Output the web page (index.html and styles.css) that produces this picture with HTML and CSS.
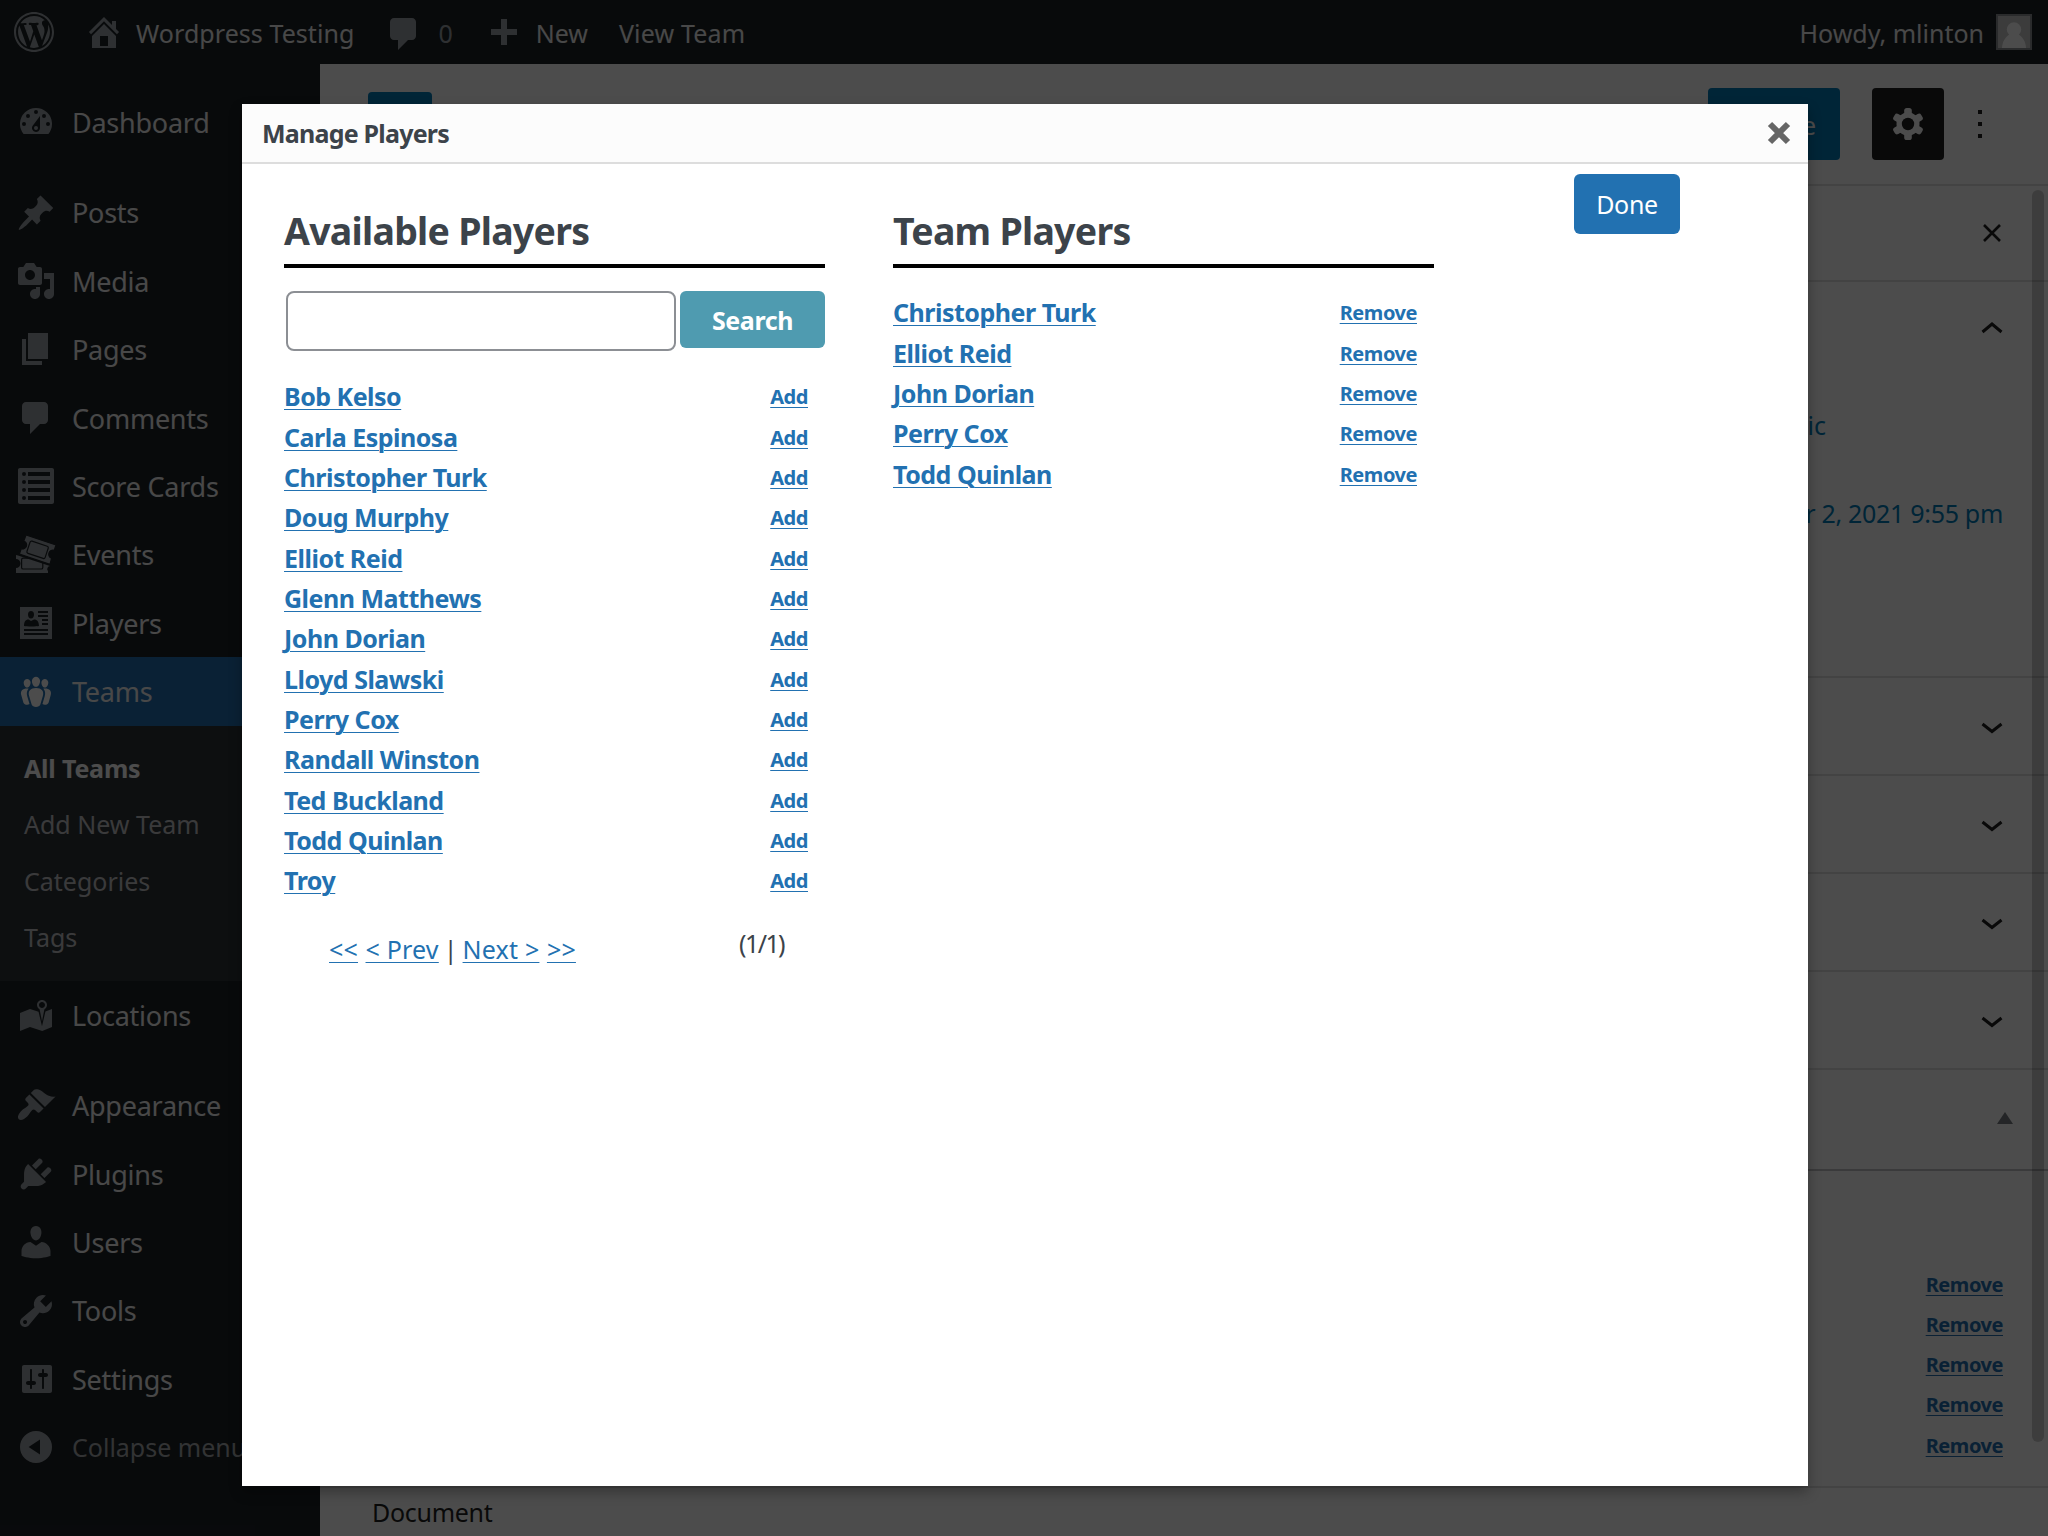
FILE: index.html
```html
<!DOCTYPE html>
<html lang="en">
<head>
<meta charset="utf-8">
<title>Edit Team</title>
<link rel="stylesheet" href="styles.css">
</head>
<body>
<header class="adminbar">
  <svg class="wp-logo" viewBox="0 0 20 20"><path d="M20 10c0-5.52-4.48-10-10-10S0 4.48 0 10s4.48 10 10 10 10-4.48 10-10zM10 1.01c4.97 0 8.99 4.02 8.99 8.99s-4.02 8.99-8.99 8.99S1.01 14.97 1.01 10 5.03 1.01 10 1.01zM8.01 14.82L4.96 6.61c.49-.03 1.05-.08 1.05-.08.43-.05.38-1.01-.06-.99 0 0-1.29.1-2.13.1-.15 0-.33 0-.52-.01 1.44-2.17 3.9-3.6 6.7-3.6 2.09 0 3.99.79 5.41 2.09-.6-.08-1.45.35-1.45 1.42 0 .66.38 1.22.79 1.88.31.54.5 1.22.5 2.21 0 1.34-1.27 4.48-1.27 4.48l-2.71-7.5c.48-.03.75-.16.75-.16.43-.05.38-1.1-.05-1.08 0 0-1.3.11-2.14.11-.78 0-2.11-.11-2.11-.11-.43-.02-.48 1.06-.05 1.08l.84.08 1.12 3.04zm6.02 2.15L16.64 10s.67-1.69.39-3.81c.63 1.14.94 2.42.94 3.81 0 2.96-1.56 5.58-3.94 6.97zM2.68 6.77L6.5 17.25c-2.67-1.3-4.47-4.08-4.47-7.25 0-1.16.2-2.23.65-3.23zm7.45 4.53l2.29 6.25c-.75.27-1.57.42-2.42.42-.72 0-1.41-.11-2.06-.3z"/></svg>
  <a class="bar-item bar-site"><svg viewBox="0 0 20 20"><path d="M16 8.5l1.53 1.53-1.06 1.06L10 4.6l-6.47 6.47-1.06-1.06L10 2.5l4 4v-2h2v4zm-6-2.46l6 5.99V18H4v-5.97zM12 17v-5H8v5h4z"/></svg><span>Wordpress Testing</span></a>
  <a class="bar-item bar-comments"><svg viewBox="0 0 20 20"><path d="M5 2h9c1.1 0 2 .9 2 2v7c0 1.1-.9 2-2 2h-2l-5 5v-5H5c-1.1 0-2-.9-2-2V4c0-1.1.9-2 2-2z"/></svg><span>0</span></a>
  <a class="bar-item bar-new"><svg viewBox="0 0 20 20"><path d="M8.5 3.5h3v5h5v3h-5v5h-3v-5h-5v-3h5z"/></svg><span>New</span></a>
  <a class="bar-item bar-view"><span>View Team</span></a>
  <a class="bar-item bar-user"><span>Howdy, mlinton</span><svg class="avatar" viewBox="0 0 36 36"><rect width="36" height="36" fill="#8c8f94"/><rect x="2" y="2" width="32" height="32" fill="#c8c8c8"/><circle cx="18" cy="15.500" r="7.200" fill="#fff"/><path d="M6 34c0-6 4-12.500 8-13.500h8c4 1 8 7.500 8 13.500z" fill="#fff"/></svg></a>
</header>

<div class="layout">
  <nav class="menu">
    <a class="item"><svg viewBox="0 0 20 20"><path fill-rule="evenodd" d="M3.800 16h12.400A8 8 0 1 0 3.800 16zM10 4a1 1 0 1 1 0 2 1 1 0 0 1 0-2zM6 6a1 1 0 1 1 0 2 1 1 0 0 1 0-2zM14 6a1 1 0 1 1 0 2 1 1 0 0 1 0-2zM4 10a1 1 0 1 1 0 2 1 1 0 0 1 0-2zM16 10a1 1 0 1 1 0 2 1 1 0 0 1 0-2zM12 7v6a2 2 0 1 1-3.750-1zM10 12a1 1 0 1 0 0 2 1 1 0 0 0 0-2z"/></svg><span>Dashboard</span></a>
    <div class="separator"></div>
    <a class="item"><svg viewBox="0 0 20 20"><path d="M10.440 3.020l1.820-1.820 6.360 6.350-1.830 1.820c-1.050-.68-2.480-.57-3.410.36l-.75.75c-.92.93-1.040 2.350-.35 3.410l-1.830 1.820-2.410-2.410-2.800 2.790c-.42.42-3.380 2.710-3.800 2.290s1.860-3.390 2.280-3.810l2.790-2.790L4.100 9.360l1.830-1.820c1.050.69 2.480.57 3.400-.36l.75-.75c.93-.92 1.050-2.350.36-3.410z"/></svg><span>Posts</span></a>
    <a class="item"><svg viewBox="0 0 20 20"><path d="M13 11V4c0-.55-.45-1-1-1h-1.670L9 1H5L3.670 3H2c-.55 0-1 .45-1 1v7c0 .55.45 1 1 1h10c.55 0 1-.45 1-1zM7 4.500c1.380 0 2.500 1.120 2.500 2.500S8.380 9.500 7 9.500 4.500 8.380 4.500 7 5.620 4.500 7 4.500zM14 6h5v10.500c0 1.380-1.120 2.500-2.500 2.500S14 17.880 14 16.500s1.120-2.500 2.500-2.500c.17 0 .34.02.5.05V9h-3V6zm-4 8.050V13h2v3.500c0 1.380-1.120 2.500-2.500 2.500S7 17.880 7 16.500 8.120 14 9.500 14c.17 0 .34.02.5.05z"/></svg><span>Media</span></a>
    <a class="item"><svg viewBox="0 0 20 20"><path d="M6 15V2h10v13H6zm-1 1h8v2H3V5h2v11z"/></svg><span>Pages</span></a>
    <a class="item"><svg viewBox="0 0 20 20"><path d="M5 2h9c1.100 0 2 .9 2 2v7c0 1.100-.9 2-2 2h-2l-5 5v-5H5c-1.100 0-2-.9-2-2V4c0-1.100.9-2 2-2z"/></svg><span>Comments</span></a>
    <a class="item"><svg viewBox="0 0 20 20"><path fill-rule="evenodd" d="M2 19h16c.55 0 1-.45 1-1V2c0-.55-.45-1-1-1H2c-.55 0-1 .45-1 1v16c0 .55.45 1 1 1zM4 3a1 1 0 1 1 0 2 1 1 0 0 1 0-2zM17 3v2H6V3zM4 7a1 1 0 1 1 0 2 1 1 0 0 1 0-2zM17 7v2H6V7zM4 11a1 1 0 1 1 0 2 1 1 0 0 1 0-2zM17 11v2H6v-2zM4 15a1 1 0 1 1 0 2 1 1 0 0 1 0-2zM17 15v2H6v-2z"/></svg><span>Score Cards</span></a>
    <a class="item"><svg viewBox="0 0 20 20"><path d="M0 10l1 .2 16 5.300A1.500 1.500 0 0 0 16 18v1H0v-2.500a2 2 0 0 0 0-4.500z"/><rect class="cut" x="2.800" y="11.600" width="10.600" height="5.400" rx=".8"/><path class="ticket-front" d="M5 0l15 5-.9 2.700a2 2 0 0 0-1.300 3.900L17 14.700 1.700 9.500l.9-2.600A2 2 0 0 0 3.900 3z"/><rect class="cut" x="6" y="4.200" width="9.600" height="6.400" rx=".8" transform="rotate(18.500 10.800 7.400)"/></svg><span>Events</span></a>
    <a class="item"><svg viewBox="0 0 20 20"><path fill-rule="evenodd" d="M2 2h16v16H2zM7.500 4C6.500 4 6 4.800 6 5.700c0 .9.400 2.100 1.500 2.100S9 6.600 9 5.700C9 4.800 8.500 4 7.500 4zM4 11.500c1 .3 6.500.3 7.500 0 0-2-.8-3.300-2.500-3.300L7.500 9 6.300 8.200C4.600 8.200 4 9.500 4 11.500zM11 4h5v1h-5zM11 6h5v1h-5zM13 8h3v1h-3zM13 10h3v1h-3zM4 13h12v1H4zM4 15h12v1H4z"/></svg><span>Players</span></a>
    <a class="item current"><svg viewBox="0 0 20 20"><path d="M8.030 4.460c-.29 1.280.55 3.460 1.970 3.460 1.410 0 2.250-2.180 1.960-3.460-.22-.98-1.080-1.630-1.960-1.630-.89 0-1.740.65-1.970 1.630zm-4.130.9c-.25 1.080.47 2.930 1.670 2.930s1.920-1.850 1.670-2.930c-.19-.83-.92-1.390-1.670-1.390s-1.480.56-1.670 1.390zm8.860 0c-.25 1.080.47 2.930 1.660 2.930 1.200 0 1.920-1.850 1.670-2.930-.19-.83-.92-1.390-1.670-1.390-.74 0-1.470.56-1.660 1.390zm-.59 11.430l1.250-4.300C14.200 10 12.710 8.470 10 8.470c-2.720 0-4.210 1.530-3.440 4.020l1.260 4.300C8.050 17.510 9 18 10 18c.98 0 1.940-.49 2.170-1.210zm-6.100-7.630c-.49.67-.96 1.830-.42 3.590l1.120 3.790c-.34.2-.77.31-1.200.31-.85 0-1.650-.41-1.850-1.030l-1.070-3.650c-.65-2.110.61-3.400 2.920-3.400.27 0 .54.02.79.06-.1.100-.2.220-.29.330zm8.350-.39c2.310 0 3.580 1.290 2.920 3.400l-1.070 3.650c-.2.62-1 1.030-1.850 1.030-.43 0-.86-.11-1.200-.31l1.110-3.770c.55-1.780.08-2.940-.42-3.610-.08-.11-.18-.23-.28-.33.25-.04.51-.06.79-.06z"/></svg><span>Teams</span></a>
    <div class="submenu"><a class="active">All Teams</a><a>Add New Team</a><a>Categories</a><a>Tags</a></div>
    <a class="item"><svg viewBox="0 0 20 20"><path d="M13 13.140l1.170-5.940c.79-.43 1.330-1.250 1.330-2.200 0-1.380-1.120-2.500-2.500-2.500S10.500 3.620 10.500 5c0 .95.54 1.770 1.330 2.200zm0-9.640c.83 0 1.500.67 1.500 1.500s-.67 1.500-1.500 1.500-1.500-.67-1.500-1.500.67-1.500 1.500-1.500zm1.720 4.800L18 6.970v9L13.120 18 7 15.970l-5 2v-9l5-2 4.270 1.410 1.730 7.300z"/></svg><span>Locations</span></a>
    <div class="separator"></div>
    <a class="item"><svg viewBox="0 0 20 20"><path d="M14.480 11.060L7.410 3.990l1.500-1.500c.5-.56 2.300-.47 3.510.32 1.210.8 1.430 1.280 2.910 2.100 1.180.64 2.450 1.260 4.450.85zm-.71.71L6.700 4.700 4.930 6.470c-.39.39-.39 1.020 0 1.410l1.060 1.060c.39.39.39 1.030 0 1.420-.6.6-1.430 1.110-2.210 1.690-.35.26-.7.53-1.010.84C1.430 14.230.4 16.080 1.400 17.070c.99 1 2.840-.03 4.180-1.360.31-.31.58-.66.85-1.020.57-.78 1.080-1.610 1.690-2.210.39-.39 1.020-.39 1.410 0l1.060 1.060c.39.39 1.020.39 1.410 0z"/></svg><span>Appearance</span></a>
    <a class="item"><svg viewBox="0 0 20 20"><path d="M13.110 4.360L9.870 7.600 8 5.730l3.240-3.240c.35-.34 1.050-.2 1.560.32.52.51.66 1.210.31 1.550zm-8 1.770l.91-1.120 9.010 9.010-1.190.84c-.71.71-2.630 1.160-3.820 1.160H6.140L4.900 17.260c-.59.59-1.540.59-2.120 0-.59-.58-.59-1.530 0-2.120l1.240-1.240v-3.880c0-1.130.4-3.190 1.090-3.890zm7.260 3.970l3.240-3.240c.34-.35 1.040-.21 1.550.31.52.51.66 1.210.31 1.550l-3.240 3.250z"/></svg><span>Plugins</span></a>
    <a class="item"><svg viewBox="0 0 20 20"><path d="M10 9.250c-2.270 0-2.730-3.440-2.730-3.440C7 4.020 7.820 2 9.970 2c2.160 0 2.980 2.020 2.710 3.810 0 0-.41 3.440-2.680 3.440zm0 2.570L12.720 10c2.390 0 4.520 2.330 4.520 4.530v2.490s-3.650 1.130-7.240 1.130c-3.650 0-7.240-1.130-7.240-1.130v-2.490c0-2.250 1.940-4.480 4.470-4.480z"/></svg><span>Users</span></a>
    <a class="item"><svg viewBox="0 0 20 20"><path d="M16.680 9.770c-1.340 1.340-3.300 1.670-4.950.99l-5.410 6.520c-.99.99-2.590.99-3.580 0s-.99-2.590 0-3.570l6.520-5.420c-.68-1.650-.35-3.610.99-4.950 1.280-1.280 3.120-1.620 4.720-1.060l-2.890 2.890 2.820 2.820 2.860-2.870c.53 1.580.18 3.390-1.080 4.650zM3.810 16.210c.4.39 1.040.39 1.430 0 .4-.4.4-1.040 0-1.430-.39-.4-1.030-.4-1.430 0-.39.39-.39 1.030 0 1.430z"/></svg><span>Tools</span></a>
    <a class="item"><svg viewBox="0 0 20 20"><path d="M18 16V4c0-.55-.45-1-1-1H4c-.55 0-1 .45-1 1v12c0 .55.45 1 1 1h13c.55 0 1-.45 1-1zM8 11h1c.55 0 1 .45 1 1s-.45 1-1 1H8v1.500c0 .28-.22.5-.5.5s-.5-.22-.5-.5V13H6c-.55 0-1-.45-1-1s.45-1 1-1h1V5.500c0-.28.22-.5.5-.5s.5.22.5.5V11zm5-2h-1c-.55 0-1-.45-1-1s.45-1 1-1h1V5.500c0-.28.22-.5.5-.5s.5.22.5.5V7h1c.55 0 1 .45 1 1s-.45 1-1 1h-1v5.500c0 .28-.22.5-.5.5s-.5-.22-.5-.5V9z"/></svg><span>Settings</span></a>
    <a class="item collapse"><svg viewBox="0 0 20 20"><path fill-rule="evenodd" d="M10 2a8 8 0 1 0 0 16 8 8 0 0 0 0-16zM12 6.300v7.400L6.300 10z"/></svg><span>Collapse menu</span></a>
  </nav>

  <main class="editor">
    <div class="toolbar">
      <span class="inserter"></span>
      <span class="update">Update</span>
      <span class="settings"><svg viewBox="0 0 32 34"><g fill="#fff"><circle cx="16" cy="17" r="11.500"/><rect x="12.200" y="1" width="7.600" height="32" rx="2.600"/><rect x="12.200" y="1" width="7.600" height="32" rx="2.600" transform="rotate(60 16 17)"/><rect x="12.200" y="1" width="7.600" height="32" rx="2.600" transform="rotate(120 16 17)"/></g><circle cx="16" cy="17" r="6.200" fill="#1e1e1e"/></svg></span>
      <span class="more"><i></i><i></i><i></i></span>
    </div>
    <div class="work">
      <div class="canvas"></div>
      <aside class="panel">
        <div class="row tabs"><svg class="cross" viewBox="0 0 20 20"><path d="M2 2l16 16M18 2L2 18"/></svg></div>
        <div class="row status">
          <svg class="chev" viewBox="0 0 22 12"><path d="M1.500 10L11 2l9.500 8"/></svg>
          <span class="public">Public</span>
          <span class="date">October 2, 2021 9:55 pm</span>
        </div>
        <div class="row fold"><svg class="chev" viewBox="0 0 22 12"><path d="M1.500 2L11 9.500 20.500 2"/></svg></div>
        <div class="row fold"><svg class="chev" viewBox="0 0 22 12"><path d="M1.500 2L11 9.500 20.500 2"/></svg></div>
        <div class="row fold"><svg class="chev" viewBox="0 0 22 12"><path d="M1.500 2L11 9.500 20.500 2"/></svg></div>
        <div class="row fold"><svg class="chev" viewBox="0 0 22 12"><path d="M1.500 2L11 9.500 20.500 2"/></svg></div>
        <div class="row metabox"><svg class="tri" viewBox="0 0 16 12"><path d="M8 0l8 12H0z"/></svg></div>
        <div class="side-list"><a>Remove</a><a>Remove</a><a>Remove</a><a>Remove</a><a>Remove</a></div>
        <div class="scrollbar"></div>
      </aside>
    </div>
    <footer class="crumb">Document</footer>
  </main>
</div>

<div class="overlay"></div>
<section class="modal">
  <div class="modal-head"><span>Manage Players</span><svg viewBox="0 0 24 24"><path d="M3 3l18 18M21 3L3 21"/></svg></div>
  <div class="modal-body">
    <div class="column">
      <h2>Available Players</h2>
      <div class="search"><input type="text"><button>Search</button></div>
      <ul class="players">
        <li><a>Bob Kelso</a><a class="act">Add</a></li>
        <li><a>Carla Espinosa</a><a class="act">Add</a></li>
        <li><a>Christopher Turk</a><a class="act">Add</a></li>
        <li><a>Doug Murphy</a><a class="act">Add</a></li>
        <li><a>Elliot Reid</a><a class="act">Add</a></li>
        <li><a>Glenn Matthews</a><a class="act">Add</a></li>
        <li><a>John Dorian</a><a class="act">Add</a></li>
        <li><a>Lloyd Slawski</a><a class="act">Add</a></li>
        <li><a>Perry Cox</a><a class="act">Add</a></li>
        <li><a>Randall Winston</a><a class="act">Add</a></li>
        <li><a>Ted Buckland</a><a class="act">Add</a></li>
        <li><a>Todd Quinlan</a><a class="act">Add</a></li>
        <li><a>Troy</a><a class="act">Add</a></li>
      </ul>
      <div class="pager"><div class="pages"><a>&lt;&lt;</a><a>&lt; Prev</a><span>|</span><a>Next &gt;</a><a>&gt;&gt;</a></div><span class="count">(1/1)</span></div>
    </div>
    <div class="column">
      <h2>Team Players</h2>
      <ul class="players team">
        <li><a>Christopher Turk</a><a class="act">Remove</a></li>
        <li><a>Elliot Reid</a><a class="act">Remove</a></li>
        <li><a>John Dorian</a><a class="act">Remove</a></li>
        <li><a>Perry Cox</a><a class="act">Remove</a></li>
        <li><a>Todd Quinlan</a><a class="act">Remove</a></li>
      </ul>
    </div>
    <button class="done">Done</button>
  </div>
</section>
</body>
</html>
```
FILE: styles.css
```css
* { box-sizing: border-box; }
body {
  margin: 0;
  width: 2048px;
  height: 1536px;
  overflow: hidden;
  position: relative;
  background: #fff;
  color: #3c434a;
  font: 25px "Noto Sans", "Open Sans", sans-serif;
}
svg { display: block; flex: none; fill: currentColor; }

/* Admin bar */
.adminbar {
  height: 64px;
  display: flex;
  align-items: center;
  background: #1d2327;
  color: #f0f0f1;
  padding: 0 16px 0 14px;
}
.adminbar svg { width: 40px; height: 40px; color: #9ca2a7; }
.bar-item { display: flex; align-items: center; line-height: 64px; }
.bar-item span { padding-top: 1px; }
.bar-site { margin-left: 30px; }
.bar-site span { margin-left: 12px; letter-spacing: .06px; }
.bar-comments { margin-left: 30px; }
.bar-comments svg { margin-top: 3px; }
.bar-comments span { margin-left: 14px; color: #9ca2a7; }
.bar-new { margin-left: 31px; }
.bar-new span { margin-left: 12px; }
.bar-view { margin-left: 31px; letter-spacing: .15px; }
.bar-user { margin-left: auto; gap: 12px; }
.bar-user .avatar { width: 36px; height: 36px; }

.layout { display: flex; height: 1472px; }

/* Side menu */
.menu {
  width: 320px;
  flex: none;
  background: #1d2327;
  color: #f0f0f1;
  padding-top: 24px;
}
.item {
  display: flex;
  align-items: center;
  gap: 16px;
  height: 68.4px;
  padding-left: 16px;
  font-size: 27px;
  line-height: 68.4px;
  letter-spacing: -.25px;
}
.item span { padding-top: 2px; }
.item svg { width: 40px; height: 40px; color: #9ca2a7; }
.item .cut { fill: none; stroke: #1d2327; stroke-width: .6; }
.item .ticket-front { stroke: #1d2327; stroke-width: .6; }
.separator { height: 22px; }
.current { background: #2271b1; }
.current svg { color: #fff; }
.submenu {
  height: 255.400px;
  padding: 14.500px 24px 0;
  background: #2c3338;
  color: #c3c4c7;
}
.submenu a { display: block; line-height: 56.400px; }
.submenu .active { color: #fff; font-weight: 700; letter-spacing: -.2px; }
.collapse { color: #a7aaad; font-size: 25px; letter-spacing: 0; }
.collapse span { padding-top: 0; }

/* Editor behind the dialog */
.editor { flex: 1; display: flex; flex-direction: column; color: #1e1e1e; }
.toolbar {
  height: 122px;
  display: flex;
  align-items: center;
  padding: 0 66px 0 48px;
  border-bottom: 2px solid #e0e0e0;
}
.inserter { width: 64px; height: 64px; border-radius: 4px; background: #007cba; }
.update {
  margin-left: auto;
  width: 132px;
  height: 72px;
  line-height: 74px;
  padding-right: 24px;
  text-align: right;
  border-radius: 4px;
  background: #007cba;
  color: #fff;
}
.settings {
  margin-left: 32px;
  width: 72px;
  height: 72px;
  display: grid;
  place-items: center;
  border-radius: 4px;
  background: #1e1e1e;
}
.settings svg { width: 32px; height: 34px; }
.more { margin-left: 34px; display: grid; gap: 8px; }
.more i { width: 4px; height: 4px; background: #1e1e1e; }
.work { flex: 1; display: flex; }
.canvas { flex: 1; }
.panel { width: 560px; position: relative; }
.row { display: flex; justify-content: flex-end; align-items: center; border-bottom: 2px solid #e0e0e0; padding-right: 45px; }
.tabs { height: 96px; }
.cross { width: 20px; height: 20px; margin-right: 1px; fill: none; stroke: #1e1e1e; stroke-width: 2.600; }
.chev { width: 22px; height: 12px; fill: none; stroke: #1e1e1e; stroke-width: 3; }
.status { height: 396px; flex-direction: column; align-items: flex-end; justify-content: flex-start; padding-top: 40px; color: #007cba; }
.public { margin: 61px 177px 0 0; line-height: 60px; }
.date { margin-top: 28px; line-height: 60px; letter-spacing: -.3px; }
.fold { height: 98px; padding-top: 4px; }
.metabox { height: 101px; padding: 0 35px 4px 0; border-color: #c3c4c7; color: #787c82; }
.tri { width: 16px; height: 12px; }
.side-list { padding: 93.500px 45px 0 0; text-align: right; }
.side-list a { display: block; line-height: 40.300px; }

/* Player links */
.side-list a, .players a, .pages a {
  color: #2271b1;
  text-decoration: underline;
  text-decoration-thickness: 1px;
  text-underline-offset: 3px;
}
.side-list a, .players .act {
  font-size: 20px;
  font-weight: 700;
  letter-spacing: -.45px;
}
.scrollbar {
  position: absolute;
  top: 4px;
  right: 4px;
  width: 12px;
  height: 1252px;
  border-radius: 6px;
  background: rgba(0, 0, 0, .2);
}
.crumb { height: 50px; border-top: 2px solid #e0e0e0; padding-left: 52px; line-height: 49px; letter-spacing: -.3px; }

/* Dialog */
.overlay { position: absolute; inset: 0; background: rgba(0, 0, 0, .7); }
.modal {
  position: absolute;
  left: 242px;
  top: 104px;
  width: 1566px;
  height: 1382px;
  background: #fff;
  box-shadow: 0 6px 12px rgba(0, 0, 0, .3);
}
.modal-head {
  height: 60px;
  display: flex;
  align-items: center;
  justify-content: space-between;
  padding: 0 17px 0 20px;
  background: #fcfcfc;
  border-bottom: 2px solid #ddd;
  font-weight: 700;
  letter-spacing: -.78px;
  line-height: 58px;
}
.modal-head svg { width: 24px; height: 24px; fill: none; stroke: #666; stroke-width: 6; }
.modal-body { display: flex; padding-left: 42px; gap: 68px; align-items: flex-start; }
.column { width: 541px; }
h2 {
  margin: 40px 0 0;
  height: 64px;
  line-height: 54px;
  font-size: 37.500px;
  font-weight: 700;
  letter-spacing: -.75px;
  border-bottom: 4px solid #000;
}
.search { display: flex; gap: 4px; margin-top: 23px; padding-left: 2px; align-items: flex-start; }
.search input { width: 390px; height: 60px; border: 2px solid #8c8f94; border-radius: 8px; background: #fff; }
.search button, .done {
  border: 0;
  font: inherit;
  color: #fff;
  padding: 0;
}
.search button { width: 145px; height: 57px; padding-top: 1px; border-radius: 6px; background: #4f9bb0; font-weight: 700; letter-spacing: -.4px; }
.players { list-style: none; margin: 25px 0 0; padding: 0 17px 0 0; }
.team { margin-top: 24px; }
.players li { height: 40.350px; display: flex; align-items: center; justify-content: space-between; line-height: 40px; }
.players a { font-weight: 700; letter-spacing: -.5px; }
.players .act { padding-top: 2px; }
.pager { display: flex; justify-content: space-between; padding: 23px 41px 0 45px; line-height: 40px; }
.pages { display: flex; gap: 7.500px; padding-top: 6px; }
.pages a { letter-spacing: .2px; }
.pages span { margin: 0 -2.500px; }
.count { letter-spacing: -1.600px; }
.done { margin: 10px 0 0 72px; width: 106px; height: 60px; border-radius: 6px; background: #2271b1; letter-spacing: -.3px; }
```
